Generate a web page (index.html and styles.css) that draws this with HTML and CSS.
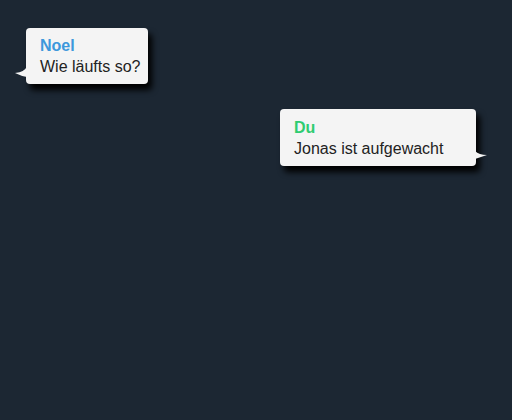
FILE: index.html
```html
<!DOCTYPE html>
<html lang="de">
<head>
<meta charset="utf-8">
<title>Chat</title>
<link rel="stylesheet" href="styles.css">
</head>
<body>
<div class="chat">
  <div class="bubble in">
    <div class="name noel">Noel</div>
    <div class="text">Wie läufts so?</div>
    <svg class="tail tail-left" width="12" height="11" viewBox="0 0 12 11"><path d="M12 0 Q10 6 0 7 Q6 10 12 11 Z" fill="#f4f4f4"/></svg>
  </div>
  <div class="bubble out">
    <div class="name du">Du</div>
    <div class="text">Jonas ist aufgewacht</div>
    <svg class="tail tail-right" width="12" height="8" viewBox="0 0 12 8"><path d="M0 0 Q4 4 12 4 Q6 6 0 8 Z" fill="#f4f4f4"/></svg>
  </div>
</div>
</body>
</html>
```
FILE: styles.css
```css
html, body {
  margin: 0;
  height: 100%;
  background: #1c2733;
}
body {
  font-family: "Liberation Sans", Arial, sans-serif;
  color: #222;
}
.chat {
  display: flex;
  flex-direction: column;
  gap: 25px;
  padding: 28px 36px 0 26px;
}
.bubble {
  position: relative;
  box-sizing: border-box;
  background: #f4f4f4;
  border-radius: 4px;
  box-shadow: 4px 6px 6px #000;
  padding: 8px 0 6px 14px;
  white-space: nowrap;
}
.bubble.in {
  align-self: flex-start;
  width: 122px;
}
.bubble.out {
  align-self: flex-end;
  width: 196px;
  padding-top: 9px;
}
.name {
  font-weight: bold;
  font-size: 16px;
  line-height: 19px;
}
.noel { color: #3d98dc; }
.du { color: #2fcc71; }
.text {
  font-size: 16px;
  line-height: 23px;
}
.tail {
  position: absolute;
  display: block;
}
.tail-left {
  left: -11px;
  bottom: 7px;
}
.tail-right {
  right: -11px;
  bottom: 7px;
}
```
